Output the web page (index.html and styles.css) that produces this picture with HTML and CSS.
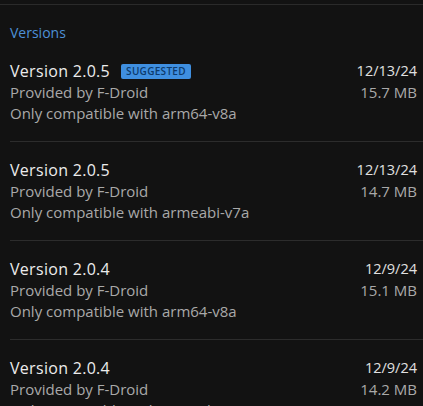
FILE: index.html
```html
<!DOCTYPE html>
<html lang="en">
<head>
  <meta charset="UTF-8" />
  <meta name="viewport" content="width=device-width, initial-scale=1.0"/>
  <title>Versions</title>
  <link rel="stylesheet" href="styles.css">
</head>
<body>
  <div class="top-rule"></div>
  <h2 class="section-title">Versions</h2>

  <!-- Version list -->
  <div class="versions">
    <div class="version-row">
      <div class="version-info">
        <div class="version-name">Version 2.0.5 <span class="badge">Suggested</span></div>
        <div class="version-sub">Provided by F-Droid</div>
        <div class="version-sub">Only compatible with arm64-v8a</div>
      </div>
      <div class="version-meta">
        <div class="version-date">12/13/24</div>
        <div class="version-size">15.7 MB</div>
      </div>
    </div>

    <div class="version-row">
      <div class="version-info">
        <div class="version-name">Version 2.0.5</div>
        <div class="version-sub">Provided by F-Droid</div>
        <div class="version-sub">Only compatible with armeabi-v7a</div>
      </div>
      <div class="version-meta">
        <div class="version-date">12/13/24</div>
        <div class="version-size">14.7 MB</div>
      </div>
    </div>

    <div class="version-row">
      <div class="version-info">
        <div class="version-name">Version 2.0.4</div>
        <div class="version-sub">Provided by F-Droid</div>
        <div class="version-sub">Only compatible with arm64-v8a</div>
      </div>
      <div class="version-meta">
        <div class="version-date">12/9/24</div>
        <div class="version-size">15.1 MB</div>
      </div>
    </div>

    <div class="version-row">
      <div class="version-info">
        <div class="version-name">Version 2.0.4</div>
        <div class="version-sub">Provided by F-Droid</div>
        <div class="version-sub">Only compatible with armeabi-v7a</div>
      </div>
      <div class="version-meta">
        <div class="version-date">12/9/24</div>
        <div class="version-size">14.2 MB</div>
      </div>
    </div>
  </div>
</body>
</html>
```

FILE: styles.css
```css
body {
  margin: 0;
  background-color: #121212;
  color: #e8e8e8;
  font-family: "Open Sans", Inter, sans-serif;
  overflow: hidden;
}

.top-rule {
  height: 1px;
  margin-top: 4px;
  background-color: #2a2a2a;
}

.section-title {
  margin: 0;
  padding: 18px 10px 0 10px;
  font-size: 14px;
  font-weight: 400;
  line-height: 20px;
  color: #4d90d6;
}

.versions {
  padding-left: 10px;
}

.version-row {
  display: flex;
  justify-content: space-between;
  padding: 17px 6px 17px 0;
  border-bottom: 1px solid #2c2c2c;
}

.version-name {
  font-size: 16px;
  line-height: 22px;
  letter-spacing: 0.3px;
  color: #ececec;
  display: flex;
  align-items: center;
  gap: 11px;
}

.badge {
  display: inline-block;
  background-color: #3f8fe0;
  color: #0c3a6c;
  font-size: 10px;
  font-weight: 600;
  letter-spacing: 0.3px;
  text-transform: uppercase;
  line-height: 15px;
  padding: 0 5px;
  border-radius: 2px;
}

.version-sub {
  font-size: 15px;
  line-height: 21px;
  color: #a9a9a9;
}

.version-meta {
  text-align: right;
}

.version-date {
  font-size: 14.5px;
  line-height: 22px;
  color: #e0e0e0;
}

.version-size {
  font-size: 15px;
  line-height: 21px;
  color: #a9a9a9;
}
```
